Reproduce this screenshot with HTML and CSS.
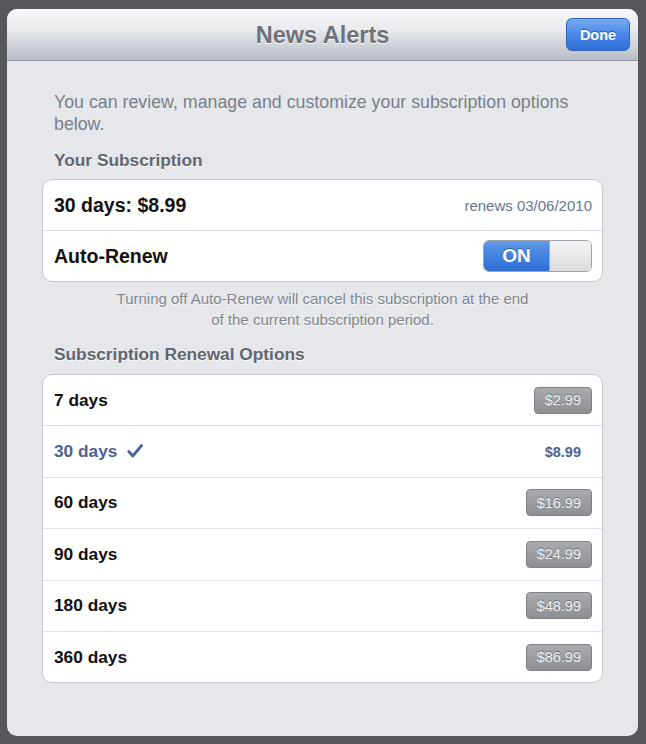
FILE: index.html
```html
<!DOCTYPE html>
<html>
<head>
<meta charset="utf-8">
<link rel="stylesheet" href="styles.css">
</head>
<body>
<div class="modal">
  <header class="bar">
    <h1 class="title">News Alerts</h1>
    <button class="done">Done</button>
  </header>
  <main class="content">
    <p class="intro">You can review, manage and customize your subscription options below.</p>
    <h2 class="section">Your Subscription</h2>
    <div class="group">
      <div class="row">
        <span class="label">30 days: $8.99</span>
        <span class="renews">renews 03/06/2010</span>
      </div>
      <div class="row">
        <span class="label">Auto-Renew</span>
        <span class="toggle"><span class="on">ON</span><span class="knob"></span></span>
      </div>
    </div>
    <p class="note">Turning off Auto-Renew will cancel this subscription at the end<br>of the current subscription period.</p>
    <h2 class="section section2">Subscription Renewal Options</h2>
    <div class="group">
      <div class="row opt"><span class="label">7 days</span><span class="price">$2.99</span></div>
      <div class="row opt"><span class="label sel">30 days <svg class="check" width="16" height="14" viewBox="0 0 16 14"><path d="M1.8 7.5 L5.8 12 L14.5 1.5" fill="none" stroke="#4b6597" stroke-width="2.8" stroke-linecap="round" stroke-linejoin="round"/></svg></span><span class="cur">$8.99</span></div>
      <div class="row opt"><span class="label">60 days</span><span class="price">$16.99</span></div>
      <div class="row opt"><span class="label">90 days</span><span class="price">$24.99</span></div>
      <div class="row opt"><span class="label">180 days</span><span class="price">$48.99</span></div>
      <div class="row opt"><span class="label">360 days</span><span class="price">$86.99</span></div>
    </div>
  </main>
</div>
</body>
</html>
```
FILE: styles.css
```css
html, body {
  margin: 0;
  padding: 0;
}
body {
  width: 646px;
  height: 744px;
  background: #56575a;
  font-family: "Liberation Sans", Arial, sans-serif;
  overflow: hidden;
}
.modal {
  margin: 9px 8px 0 7px;
  height: 727px;
  border-radius: 10px;
  overflow: hidden;
  background: #e5e7ea;
  display: flex;
  flex-direction: column;
}
.bar {
  height: 52px;
  flex: none;
  box-sizing: border-box;
  border-bottom: 1px solid #8d929b;
  background: linear-gradient(#f7f8f9 0%, #e8eaed 40%, #b8bdc6 100%);
  display: flex;
  align-items: center;
  justify-content: center;
  position: relative;
}
.title {
  margin: 2px 0 0;
  font-size: 23.5px;
  font-weight: bold;
  color: #6c717a;
  text-shadow: 0 1px 0 #fff;
}
.done {
  position: absolute;
  right: 8px;
  top: 9px;
  width: 64px;
  height: 33px;
  border: 1px solid #2f62b8;
  border-radius: 6px;
  background: linear-gradient(#78abf2 0%, #4b88e6 50%, #2e6fd8 100%);
  color: #fff;
  font-family: "Liberation Sans", Arial, sans-serif;
  font-weight: bold;
  font-size: 14.5px;
  text-shadow: 0 -1px 0 #2a5aa8;
  padding: 0;
}
.content {
  padding: 30px 35px 0 35px;
}
.intro {
  margin: 0;
  padding: 0 12px;
  font-size: 17.8px;
  line-height: 22px;
  color: #7a7f88;
}
.section {
  margin: 15px 0 9px;
  padding: 0 12px;
  font-size: 17.3px;
  line-height: 20px;
  font-weight: bold;
  color: #5f6670;
  text-shadow: 0 1px 0 #fff;
}
.section2 {
  margin-top: 14px;
  margin-bottom: 10px;
}
.group {
  background: #fff;
  border: 1px solid #c5c8cc;
  border-radius: 10px;
  overflow: hidden;
}
.row {
  height: 50px;
  display: flex;
  align-items: center;
  justify-content: space-between;
  padding: 0 10px 0 11px;
  border-bottom: 1px solid #dfe0e2;
}
.opt {
  height: 50.4px;
}
.row:last-child {
  border-bottom: none;
}
.label {
  font-size: 19.5px;
  font-weight: bold;
  color: #111;
}
.opt .label {
  font-size: 17.3px;
}
.renews {
  font-size: 15px;
  color: #667690;
}
.toggle {
  width: 109px;
  height: 32px;
  box-sizing: border-box;
  border: 1px solid #9ea2a8;
  border-radius: 6px;
  overflow: hidden;
  display: flex;
}
.on {
  width: 65px;
  background: linear-gradient(#6399e6 0%, #4282e0 50%, #2f6fd4 100%);
  color: #fff;
  font-weight: bold;
  font-size: 19px;
  display: flex;
  align-items: center;
  justify-content: center;
  text-shadow: 0 -1px 0 #2c5aa6;
}
.knob {
  flex: 1;
  background: linear-gradient(#f4f4f4, #dcdcdc);
  border-left: 1px solid #a8abb0;
}
.note {
  margin: 6px 0 0;
  text-align: center;
  font-size: 15px;
  line-height: 21px;
  color: #80858c;
  text-shadow: 0 1px 0 #fff;
}
.price {
  height: 27px;
  box-sizing: border-box;
  padding: 0 10px;
  border: 1px solid #7e8085;
  border-radius: 4px;
  background: linear-gradient(#a9abaf, #8d8f93);
  color: #f0f1f3;
  font-size: 14.5px;
  display: flex;
  align-items: center;
  text-shadow: 0 -1px 0 #6e7074;
}
.sel {
  color: #4b6597;
  display: flex;
  align-items: center;
  gap: 10px;
}
.check {
  margin-top: -2px;
}
.cur {
  color: #4b6597;
  font-size: 14.5px;
  font-weight: bold;
  margin-right: 11px;
}
```
